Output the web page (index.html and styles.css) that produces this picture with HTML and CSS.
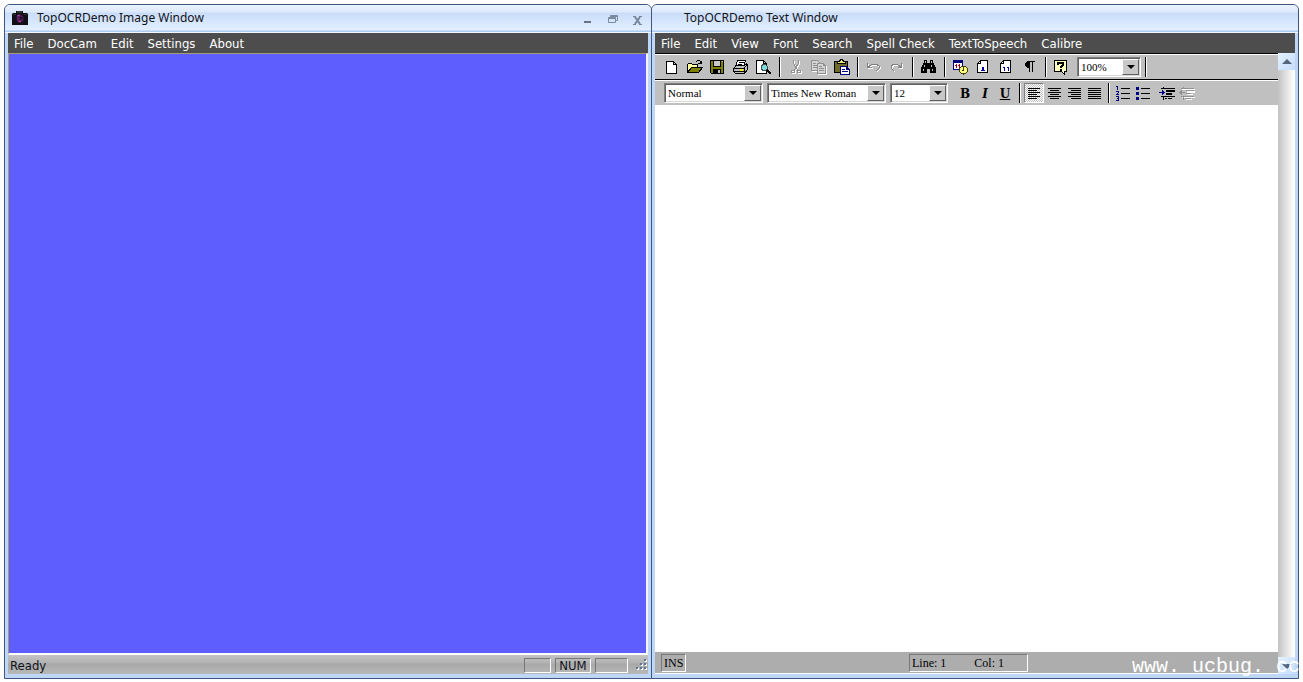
FILE: index.html
```html
<!DOCTYPE html>
<html lang="en">
<head>
<meta charset="utf-8">
<title>TopOCRDemo</title>
<link rel="stylesheet" href="styles.css">
</head>
<body>
<main class="desktop">
  <section class="window">
    <header class="titlebar">
      <svg class="app-icon" width="16" height="16" viewBox="0 0 16 16"><path fill="#101014" d="M1 3h3V1h7v2h4l1 1v11H0V4z"/><path fill="#333" d="M5 1h5v2H5zM1 4h3v1H1zM12 4h3v1h-3z"/><circle cx="8" cy="8.500" r="4.500" fill="#2c1230"/><circle cx="8" cy="8.500" r="3" fill="#5c2060"/><circle cx="9" cy="8" r="1.500" fill="#1c0c24"/><path d="M5 6l3-1M6 11l3 1" stroke="#a0509a"/></svg>
      <h1 class="title">TopOCRDemo Image Window</h1>
      <div class="controls">
        <button class="control" aria-label="Minimize"><svg width="12" height="12" viewBox="0 0 12 12"><path fill="#66748a" d="M2 7h7v2H2z"/></svg></button>
        <button class="control" aria-label="Restore"><svg width="12" height="12" viewBox="0 0 12 12"><path fill="none" stroke="#7c8aa0" d="M1.500 3.500h7v5h-7zM3.500 3V1.500h7v5H9M1 4.500h8M3 2.500h8"/></svg></button>
        <button class="control" aria-label="Close"><svg width="12" height="12" viewBox="0 0 12 12"><path stroke="#76849a" stroke-width="2" d="M3 3l5 7M8 3l-5 7"/><path stroke="#76849a" d="M1 2.500h3M7 2.500h3M1 10.500h3M7 10.500h3"/></svg></button>
      </div>
    </header>
    <nav class="menubar">
      <button class="menu">File</button><button class="menu">DocCam</button><button class="menu">Edit</button><button class="menu">Settings</button><button class="menu">About</button>
    </nav>
    <div class="canvas"></div>
    <footer class="status">
      <span class="ready">Ready</span>
      <span class="pane pane-cap"></span>
      <span class="pane pane-num">NUM</span>
      <span class="pane pane-scroll"></span>
      <svg class="grip" width="12" height="12" viewBox="0 0 12 12"><path fill="#fff" d="M9 1h2v2H9zM9 5h2v2H9zM5 5h2v2H5zM9 9h2v2H9zM5 9h2v2H5zM1 9h2v2H1z"/><path fill="#5f7794" d="M8 0h2v2H8zM8 4h2v2H8zM4 4h2v2H4zM8 8h2v2H8zM4 8h2v2H4zM0 8h2v2H0z"/></svg>
    </footer>
  </section>

  <section class="window window-text">
    <header class="titlebar">
      <h1 class="title title-text">TopOCRDemo Text Window</h1>
    </header>
    <nav class="menubar">
      <button class="menu">File</button><button class="menu">Edit</button><button class="menu">View</button><button class="menu">Font</button><button class="menu">Search</button><button class="menu">Spell Check</button><button class="menu">TextToSpeech</button><button class="menu">Calibre</button>
    </nav>
    <div class="work">
      <div class="editor">
        <div class="toolbar">
          <button class="tool" aria-label="New"><svg class="icon" viewBox="0 0 16 16"><path fill="#fff" stroke="#000" d="M2.500 2.500h7l3 3v9h-10zM9.500 2.500v3h3"/></svg></button>
          <button class="tool" aria-label="Open"><svg class="icon" viewBox="0 0 16 16"><path fill="#ffff9c" stroke="#000" d="M.5 13.500v-8l1-1h3l1 1h5v3h-6z"/><path fill="#808000" stroke="#000" d="M.5 13.500l4-5h11l-4 5z"/><path fill="none" stroke="#000" d="M9 2.500h1M10 1.500h3M13.500 2v3M11 4.500h4M14.500 2v3"/></svg></button>
          <button class="tool" aria-label="Save"><svg class="icon" viewBox="0 0 16 16"><path fill="#808000" stroke="#000" d="M.5 1.500h13v13h-12l-1-1z"/><path fill="#c8c8c8" stroke="#000" d="M3.500 1.500h7v6h-7z"/><path d="M3 10h8v5H3z"/><path fill="#c0c0c0" d="M8 11h2v3H8zM12 2h1v1h-1z"/></svg></button>
          <button class="tool" aria-label="Print"><svg class="icon" viewBox="0 0 16 16"><path fill="#fff" stroke="#000" d="M4.500 1.500h8l-2 6h-8z"/><path stroke="#000" d="M6 3.500h5M5 5.500h4"/><path fill="#c0c0c0" stroke="#000" d="M.5 9.500l3-3h8l2-2 1 1v5l-3 4h-9l-2-2z"/><path stroke="#000" d="M1 9.500h10M11.500 9v5M11 9.500l3-4M1 12.500h10"/><path fill="#ffff00" d="M7 10h3v2H7z"/></svg></button>
          <button class="tool" aria-label="Print preview"><svg class="icon" viewBox="0 0 16 16"><path fill="#fff" stroke="#000" d="M.5 1.500h7l3 3v10H.5zM7.500 1.500v3h3"/><circle cx="8.500" cy="8.500" r="3" fill="#7fd8d8" stroke="#405050"/><path stroke="#000" stroke-width="2" d="M11 11l4 4"/></svg></button>
          <span class="sep"></span>
          <button class="tool" aria-label="Cut" disabled><svg class="icon" viewBox="0 0 16 16"><g fill="none" stroke="#fff" transform="translate(1 1)"><path d="M5.500 1v3l4 7M10.500 1v3l-4 7"/><circle cx="5" cy="12.500" r="1.500"/><circle cx="11" cy="12.500" r="1.500"/></g><g fill="none" stroke="#909090"><path d="M5.500 1v3l4 7M10.500 1v3l-4 7"/><circle cx="5" cy="12.500" r="1.500"/><circle cx="11" cy="12.500" r="1.500"/></g></svg></button>
          <button class="tool" aria-label="Copy" disabled><svg class="icon" viewBox="0 0 16 16"><path fill="none" stroke="#fff" d="M1.500 2.500h6l2 2v8h-8zM7.500 5.500h6l2 2v8h-8z"/><path fill="#d4d4d4" stroke="#909090" d="M.5 1.500h6l2 2v8h-8z"/><path fill="#d4d4d4" stroke="#909090" d="M6.500 4.500h6l2 2v8h-8zM12.500 4.500v2h2"/><path stroke="#909090" d="M2 4.500h3M2 6.500h4M2 8.500h4M8 7.500h3M8 9.500h5M8 11.500h5"/></svg></button>
          <button class="tool" aria-label="Paste"><svg class="icon" viewBox="0 0 16 16"><path fill="#6e6a28" stroke="#000" d="M.5 2.500h13v11H.5z"/><path fill="#e8e070" stroke="#000" d="M3.500 4.500v-2h2l1-2h2l1 2h2v2z"/><path fill="#fff" stroke="#000080" d="M6.500 7.500h6l3 3v5h-9zM12.500 7.500v3h3M8 10.500h3M8 12.500h6"/></svg></button>
          <span class="sep"></span>
          <button class="tool" aria-label="Undo" disabled><svg class="icon" viewBox="0 0 16 16"><path fill="none" stroke="#fff" d="M2.500 5v4.500h4M3 9l5-3h3l3 2v2l-3 3"/><path fill="none" stroke="#808080" d="M1.500 4v4.500h4M2 8l5-3h3l3 2v2l-3 3"/></svg></button>
          <button class="tool" aria-label="Redo" disabled><svg class="icon" viewBox="0 0 16 16"><path fill="none" stroke="#fff" d="M13.500 5v4.500h-4M13 9L9 6H6L3 8v2l3 3"/><path fill="none" stroke="#808080" d="M12.500 4v4.500h-4M12 8L8 5H5L2 7v2l3 3"/></svg></button>
          <span class="sep"></span>
          <button class="tool" aria-label="Find"><svg class="icon" viewBox="0 0 16 16"><path d="M3 1h3v3h3V1h3v3h1v2h1v2h1v6H9v-4H6v4H0V8h1V6h1V4h1z"/><path fill="#c0c0c0" d="M4 2h1v2H4zM10 2h1v2h-1zM3 6h1v2H3zM2 10h1v2H2zM10 6h1v2h-1zM11 10h1v2h-1z"/></svg></button>
          <span class="sep"></span>
          <button class="tool" aria-label="Date and time"><svg class="icon" viewBox="0 0 16 16"><path fill="#fff" stroke="#000080" d="M.5 1.500h9v9h-9z"/><path fill="#000080" d="M0 1h10v3H0z"/><path fill="#a00020" d="M3 5h1v4H3zM6 5h1v4H6zM2 6h1v1H2zM5 6h1v1H5z"/><circle cx="10.500" cy="11" r="4" fill="#ffff80" stroke="#404000"/><path fill="none" stroke="#404000" d="M10.500 8v3.500h-2"/></svg></button>
          <button class="tool" aria-label="Page number"><svg class="icon" viewBox="0 0 16 16"><path fill="#fff" stroke="#000" d="M1.500 4.500l3-3h7v12h-10zM4.500 1.500v3h-3"/><path fill="#0000a0" d="M6 8h2v3h1v1H5v-1h1z"/></svg></button>
          <button class="tool" aria-label="Page count"><svg class="icon" viewBox="0 0 16 16"><path fill="#fff" stroke="#000" d="M1.500 4.500l3-3h7v12h-10zM4.500 1.500v3h-3"/><path fill="#0000a0" d="M4 8h2v4H5v-3H4zM8 8h2v4H9v-3H8z"/></svg></button>
          <button class="tool" aria-label="Paragraph marks"><svg class="icon" viewBox="0 0 16 16"><path d="M5 2h8v1h-2v10h-1V3H8v10H7V9H5L3 7V4z"/></svg></button>
          <span class="sep"></span>
          <button class="tool" aria-label="Help"><svg class="icon" viewBox="0 0 16 16"><path fill="#ffffc0" stroke="#000" d="M.5 1.500h12v11h-2v3l-3-3h-7z"/><path fill="none" stroke="#000" stroke-width="2" d="M4 6V4h5v2L7 8v1M6 11h2"/></svg></button>
          <label class="combo combo-zoom"><select aria-label="Zoom"><option>100%</option></select><span class="drop"></span></label>
          <span class="sep"></span>
        </div>
        <div class="toolbar toolbar-format">
          <label class="combo combo-style"><select aria-label="Style"><option>Normal</option></select><span class="drop"></span></label>
          <label class="combo combo-font"><select aria-label="Font"><option>Times New Roman</option></select><span class="drop"></span></label>
          <label class="combo combo-size"><select aria-label="Size"><option>12</option></select><span class="drop"></span></label>
          <div class="formats">
            <button class="tool letter">B</button><button class="tool letter italic">I</button><button class="tool letter underline">U</button>
          </div>
          <span class="sep"></span>
          <button class="tool pressed" aria-label="Align left"><svg class="icon" viewBox="0 0 16 16"><path stroke="#000" d="M2 3.500h12M2 5.500h9M2 7.500h12M2 9.500h9M2 11.500h12M2 13.500h9"/></svg></button>
          <button class="tool" aria-label="Center"><svg class="icon" viewBox="0 0 16 16"><path stroke="#000" d="M2 3.500h13M4 5.500h9M2 7.500h13M4 9.500h9M2 11.500h13M4 13.500h9"/></svg></button>
          <button class="tool" aria-label="Align right"><svg class="icon" viewBox="0 0 16 16"><path stroke="#000" d="M2 3.500h13M5 5.500h10M2 7.500h13M5 9.500h10M2 11.500h13M5 13.500h10"/></svg></button>
          <button class="tool" aria-label="Justify"><svg class="icon" viewBox="0 0 16 16"><path stroke="#000" d="M2 3.500h13M2 5.500h13M2 7.500h13M2 9.500h13M2 11.500h13M2 13.500h13"/></svg></button>
          <span class="sep"></span>
          <button class="tool" aria-label="Numbered list"><svg class="icon" viewBox="0 0 16 16"><path stroke="#000" d="M6 3.500h9M6 8.500h9M6 13.500h9"/><path fill="none" stroke="#000080" d="M1 1.500h1.500V5M1 6.500h2.500v1l-2 2H4M1 11.500h2.500v4H1M1.500 13.500h2"/></svg></button>
          <button class="tool" aria-label="Bulleted list"><svg class="icon" viewBox="0 0 16 16"><path stroke="#000" d="M6 3.500h9M6 8.500h9M6 13.500h9"/><path fill="#000080" d="M1 2h3v3H1zM1 7h3v3H1zM1 12h3v3H1z"/></svg></button>
          <div class="indents">
            <button class="tool" aria-label="Increase indent"><svg class="icon" viewBox="0 0 16 16"><path stroke="#000" d="M2 3.500h14M7 5.500h9M7 6.500h9M7 8.500h6M7 9.500h6M2 11.500h14M6 13.500h2M9 13.500h4M4.500 2v2M4.500 11v4"/><path fill="#000080" d="M0 7h3V5l3 2.500L3 10V8H0z"/></svg></button>
            <button class="tool" aria-label="Decrease indent" disabled><svg class="icon" viewBox="0 0 16 16"><path stroke="#fff" d="M3 4.500h13M8 6.500h8M8 7.500h8M8 9.500h6M3 12.500h13M7 14.500h6"/><path stroke="#909090" d="M2 3.500h13M7 5.500h8M7 8.500h5M2 11.500h13M6 13.500h6M4.500 2v2M4.500 11v4"/><path fill="#909090" d="M6 7H3V5L0 7.500 3 10V8h3z"/></svg></button>
          </div>
        </div>
        <textarea class="page" aria-label="Document text"></textarea>
        <footer class="status-text">
          <span class="pane-serif">INS</span>
          <span class="pane-serif pane-pos"><span>Line: 1</span><span>Col: 1</span></span>
        </footer>
      </div>
      <div class="scrollbar">
        <button class="scroll-btn" aria-label="Scroll up"><svg width="10" height="6" viewBox="0 0 10 6"><path fill="#54657c" d="M5 0l5 5H0z"/></svg></button>
        <button class="scroll-btn" aria-label="Scroll down"><svg width="10" height="6" viewBox="0 0 10 6"><path fill="#54657c" d="M5 6L0 1h10z"/></svg></button>
      </div>
    </div>
  </section>
  <p class="watermark">www. ucbug. cc</p>
</main>
</body>
</html>
```
FILE: styles.css
```css
* { box-sizing: border-box; }
body { margin: 0; background: #fff; font-family: "DejaVu Sans Condensed", "Noto Sans", sans-serif; font-size: 13px; color: #10131a; }
button { border: 0; padding: 0; background: none; font: inherit; color: inherit; }
.desktop { position: relative; display: flex; height: 100vh; padding: 4px 4px 3px; overflow: hidden; }
.window { flex: 1; min-width: 0; display: flex; flex-direction: column; border: 1px solid #3f5680; border-radius: 6px 6px 0 0; background: #bfd7f7; padding: 0 3px 4px; }
.window-text { margin-left: -1px; }
.titlebar { display: flex; align-items: center; height: 28px; margin: 0 -3px; padding: 0 7px 2px 7px; border-bottom: 1px solid #f4f8ff; border-radius: 5px 5px 0 0; background: linear-gradient(#eaf2fe 0, #dce9fc 7px, #c9dcf8 8px, #e2efff 25px, #aecbf0 26px); }
.app-icon { margin-right: 9px; }
.title { margin: 0; font: 12px/16px "Noto Sans", sans-serif; }
.title-text { margin-left: 25px; }
.controls { display: flex; gap: 13px; margin-left: auto; padding-top: 4px; }
.control { width: 12px; height: 12px; line-height: 0; }
.menubar { display: flex; gap: 14px; height: 20px; padding: 1px 6px 0; background: #4d4d4d; color: #fff; }
.menu { line-height: 19px; white-space: nowrap; }
.canvas { flex: 1; background: #5e5eff; border: 1px solid #a09c74; border-right: 2px solid #f4f4ff; border-bottom: 2px solid #fff; }
.status { display: flex; align-items: center; height: 19px; padding: 1px 0 0 2px; gap: 4px; background: linear-gradient(#c4c4c4, #b2b2b2 8px, #a8a8a8 9px, #b8b8b8); }
.ready { margin-right: auto; }
.pane { height: 15px; line-height: 14px; border: 1px solid; border-color: #777 #fff #fff #777; text-align: center; }
.pane-cap { width: 27px; }
.pane-num { width: 36px; }
.pane-scroll { width: 33px; }
.grip { margin: 0 0 0 4px; }
.work { flex: 1; display: flex; min-height: 0; }
.editor { flex: 1; min-width: 0; display: flex; flex-direction: column; }
.toolbar { display: flex; align-items: center; height: 26px; padding-left: 5px; border-top: 1px solid #000; background: #c0c0c0; box-shadow: inset 0 1px #fff; }
.toolbar-format { padding-left: 9px; }
.tool { display: flex; align-items: center; justify-content: center; width: 23px; height: 20px; }
.toolbar-format .tool { width: 20px; }
.icon { width: 16px; height: 16px; shape-rendering: crispEdges; }
.sep { width: 9px; height: 20px; background: linear-gradient(90deg, transparent 4px, #000 4px, #000 5px, #fff 5px, #fff 6px, transparent 6px); }
.combo { display: flex; height: 20px; padding: 1px; background: #fff; border: 1px solid; border-color: #808080 #fff #fff #808080; box-shadow: inset 1px 1px #606060, inset -1px -1px #d8d8d8; margin-right: 4px; }
.combo select { flex: 1; min-width: 0; appearance: none; border: 0; border-radius: 0; padding: 0 0 0 2px; margin: 0; background: transparent; color: #000; font: 11px "Liberation Serif", serif; }
.combo-zoom { width: 64px; margin: 0 0 0 4px; }
.combo-style { width: 99px; }
.combo-font { width: 119px; }
.combo-size { width: 58px; }
.drop { display: flex; align-items: center; justify-content: center; width: 17px; background: #c8c8c8; border: 1px solid; border-color: #fff #606060 #606060 #fff; pointer-events: none; }
.drop::after { content: ""; border: 4px solid transparent; border-top-color: #000; border-bottom: 0; }
.formats { display: flex; margin-left: 3px; }
.letter { padding-top: 2px; font: bold 12px "DejaVu Serif", serif; color: #000; }
.italic { font-style: italic; }
.underline { text-decoration: underline; }
.pressed { border: 1px solid; border-color: #808080 #fff #fff #808080; background: repeating-conic-gradient(#c0c0c0 0 25%, #fff 0 50%) 0 0 / 2px 2px; }
.indents { display: flex; margin-left: 4px; }
.page { flex: 1; width: 100%; min-height: 0; border: 0; padding: 8px; resize: none; background: #fff; outline: 0; font: 16px "Liberation Serif", serif; }
.status-text { display: grid; grid-template-columns: 248px auto; justify-content: start; align-items: center; height: 22px; padding-left: 6px; background: #adadad; border-bottom: 1px solid #fff; font: 12px "Liberation Serif", serif; color: #000; }
.pane-serif { justify-self: start; height: 18px; padding: 0 2px; line-height: 16px; border: 1px solid; border-color: #777 #fff #fff #777; }
.pane-pos { display: flex; gap: 28px; width: 119px; }
.scrollbar { display: flex; flex-direction: column; justify-content: space-between; width: 17px; background: linear-gradient(90deg, #c2c2c2, #f6f6f6 80%, #fff); }
.scroll-btn { display: flex; align-items: center; justify-content: center; height: 17px; background: linear-gradient(135deg, #e6f1ff, #c4dcfb); }
.watermark { position: absolute; left: 1132px; bottom: 4px; margin: 0; font: 20px/23px "Liberation Mono", monospace; color: #fff; white-space: pre; }
```
